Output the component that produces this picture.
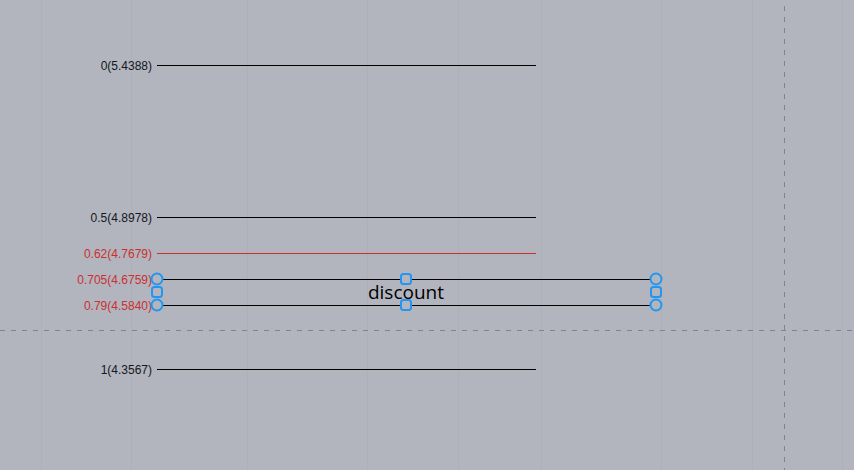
import React from "react";

const gridXs = [41, 131, 247, 367, 458, 541, 661, 752, 842];

interface Level {
  label: string;
  y: number;
  red: boolean;
  x2: number;
}

const levels: Level[] = [
  { label: "0(5.4388)", y: 65, red: false, x2: 536 },
  { label: "0.5(4.8978)", y: 217, red: false, x2: 536 },
  { label: "0.62(4.7679)", y: 253, red: true, x2: 536 },
  { label: "0.705(4.6759)", y: 279, red: true, x2: 656 },
  { label: "0.79(4.5840)", y: 305, red: true, x2: 656 },
  { label: "1(4.3567)", y: 369, red: false, x2: 536 },
];

const RED = "#cc2f2f";
const BLUE = "#2196f3";
const BG = "#b2b5be";

function Handle({ x, y, kind }: { x: number; y: number; kind: "circle" | "square" }) {
  if (kind === "circle") {
    return <circle cx={x} cy={y} r={5.5} fill={BG} stroke={BLUE} strokeWidth={2} />;
  }
  return (
    <rect x={x - 5} y={y - 5} width={10} height={10} rx={2.5} fill={BG} stroke={BLUE} strokeWidth={2} />
  );
}

export default function App() {
  return (
    <div className="w-[854px] h-[470px] bg-[#b2b5be] overflow-hidden">
      <svg width={854} height={470} className="block font-['Liberation_Sans',Arial,sans-serif]">
        {/* vertical grid */}
        {gridXs.map((x) => (
          <line key={x} x1={x + 0.5} y1={0} x2={x + 0.5} y2={470} stroke="#adb0ba" strokeWidth={1} />
        ))}

        {/* fib levels */}
        {levels.map((lv) => (
          <g key={lv.label}>
            <line
              x1={157}
              y1={lv.y + 0.5}
              x2={lv.x2}
              y2={lv.y + 0.5}
              stroke={lv.label.startsWith("0.62") ? RED : "#000000"}
              strokeWidth={1}
            />
            <text x={152} y={lv.y + 4.5} textAnchor="end" fontSize={12} fill={lv.red ? RED : "#131722"}>
              {lv.label}
            </text>
          </g>
        ))}

        {/* discount label */}
        <text
          x={406}
          y={299}
          textAnchor="middle"
          fontSize={19}
          fontWeight={500}
          fill="#000000"
          className="font-['Open_Sans','Noto_Sans',sans-serif]"
        >
          discount
        </text>

        {/* crosshair */}
        <line x1={0} y1={330.5} x2={854} y2={330.5} stroke="#758696" strokeWidth={1} strokeDasharray="5 6" />
        <line x1={784.5} y1={6} x2={784.5} y2={470} stroke="#758696" strokeWidth={1} strokeDasharray="5 6" />

        {/* selection handles */}
        <Handle x={157} y={279} kind="circle" />
        <Handle x={656} y={279} kind="circle" />
        <Handle x={157} y={305} kind="circle" />
        <Handle x={656} y={305} kind="circle" />
        <Handle x={406} y={279} kind="square" />
        <Handle x={406} y={305} kind="square" />
        <Handle x={157} y={292} kind="square" />
        <Handle x={656} y={292} kind="square" />
      </svg>
    </div>
  );
}
